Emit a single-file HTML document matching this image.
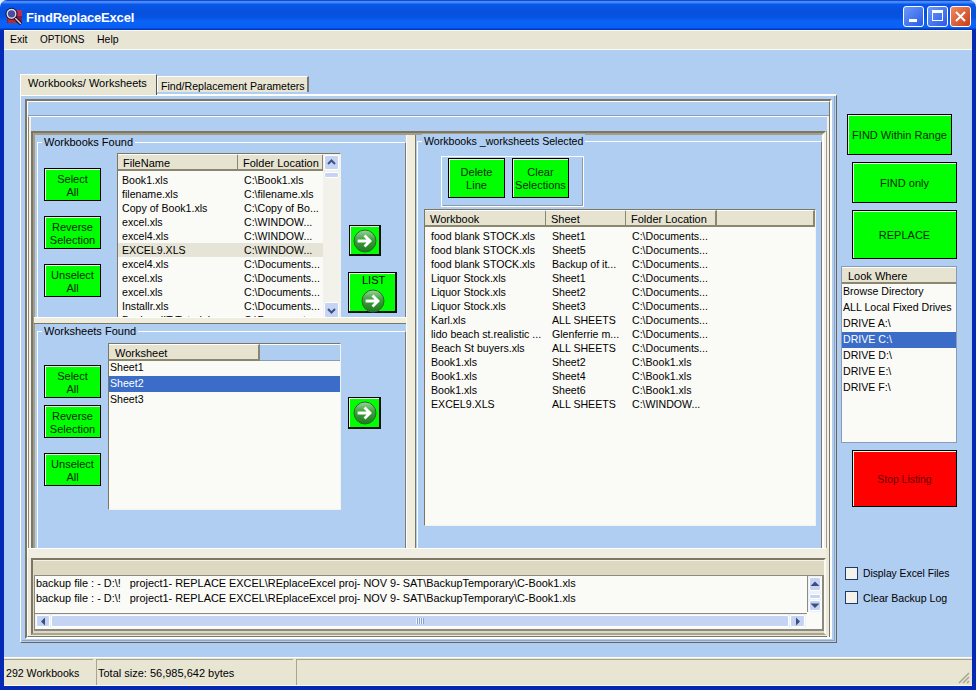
<!DOCTYPE html>
<html><head><meta charset="utf-8"><style>
html,body{margin:0;padding:0;}
body{width:976px;height:690px;position:relative;overflow:hidden;background:#b0cdf2;font-family:"Liberation Sans",sans-serif;font-size:11px;color:#000;}
.a{position:absolute;box-sizing:border-box;}
.t{position:absolute;white-space:nowrap;line-height:14px;}
.btn{position:absolute;box-sizing:border-box;background:#00ff00;border:1px solid #000;color:#062a06;text-align:center;line-height:13px;display:flex;align-items:center;justify-content:center;font-size:11px;padding-top:2px;box-shadow:inset 1px 1px 0 #e8ffe8;}
.lv{position:absolute;box-sizing:border-box;background:#fafaf6;border:1px solid #7b7763;border-right-color:#f4f4ee;border-bottom-color:#f4f4ee;overflow:hidden;}
.hd{position:absolute;top:0;height:17px;box-sizing:border-box;background:#e6e3d0;border-right:2px solid #8a8670;border-bottom:2px solid #8a8670;border-top:1px solid #fff;line-height:14px;padding-top:1px;padding-left:5px;}
.row{position:absolute;left:0;right:0;height:14px;line-height:14px;white-space:nowrap;font-size:10.6px;}
.row span{position:absolute;top:0;}
.sb{position:absolute;box-sizing:border-box;background:#c6d4f4;border:1px solid #fff;border-radius:2px;}
</style></head><body>
<div class="a" style="left:0px;top:0px;width:976px;height:690px;background:#0429b4;"></div>
<div class="a" style="left:0px;top:0px;width:976px;height:8px;background:#e8eef8;"></div>
<div class="a" style="left:0px;top:0px;width:976px;height:30px;background:linear-gradient(#1848c8 0px,#1848c8 1px,#4a90ff 1px,#3a84fc 3px,#0a58ea 4px,#0650dc 12px,#0654e4 18px,#0a62f6 21px,#0a60f4 28px,#0238c0 29px,#0238c0 30px);border-radius:7px 7px 0 0;"></div>
<svg class="a" style="left:4px;top:6px" width="22" height="20" viewBox="0 0 22 20"><rect x="3" y="4" width="15" height="13" fill="#7a2050"/><rect x="13" y="4" width="5" height="6" fill="#b83058"/><rect x="4" y="13" width="8" height="4" fill="#c02828"/><circle cx="7.5" cy="7.8" r="4.4" fill="#4a4aa0" stroke="#d8d8e0" stroke-width="1.6"/><circle cx="7.5" cy="7.8" r="5.6" fill="none" stroke="#101030" stroke-width="0.9"/><path d="M11 12 L17 18" stroke="#101020" stroke-width="3.2"/><path d="M11.3 12.3 L16.8 17.8" stroke="#f0c8c8" stroke-width="1.4"/></svg>
<div class="t" style="left:26px;top:10px;color:#fff;font-weight:bold;font-size:13px;line-height:16px;letter-spacing:-0.2px;">FindReplaceExcel</div>
<div class="a" style="left:903px;top:6px;width:21px;height:21px;border:1px solid #fff;border-radius:3px;background:linear-gradient(135deg,#6a9af8,#2a5ae8);"></div>
<div class="a" style="left:927px;top:6px;width:21px;height:21px;border:1px solid #fff;border-radius:3px;background:linear-gradient(135deg,#6a9af8,#2a5ae8);"></div>
<div class="a" style="left:950px;top:6px;width:21px;height:21px;border:1px solid #fff;border-radius:3px;background:linear-gradient(135deg,#f08a60,#c83c18);"></div>
<div class="a" style="left:909px;top:19px;width:8px;height:3px;background:#fff;"></div>
<div class="a" style="left:932px;top:10px;width:11px;height:11px;border:1px solid #fff;border-top-width:3px;"></div>
<svg class="a" style="left:954px;top:10px" width="13" height="13" viewBox="0 0 13 13"><path d="M2 2 L11 11 M11 2 L2 11" stroke="#fff" stroke-width="2"/></svg>
<div class="a" style="left:4px;top:30px;width:968px;height:20px;background:#e8e5d4;border-top:1px solid #fcfcf4;border-bottom:1px solid #fcfcf4;"></div>
<div class="t" style="left:10px;top:32px;font-size:10.5px;">Exit</div>
<div class="t" style="left:40px;top:33px;font-size:10px;letter-spacing:-0.1px;">OPTIONS</div>
<div class="t" style="left:97px;top:32px;font-size:10.5px;">Help</div>
<div class="a" style="left:4px;top:50px;width:968px;height:607px;background:#b0cdf2;"></div>
<div class="a" style="left:4px;top:657px;width:968px;height:29px;background:#e8e5d3;border-top:1px solid #fff;"></div>
<div class="a" style="left:4px;top:659px;width:89px;height:26px;border-top:1px solid #a8a490;"></div>
<div class="a" style="left:96px;top:659px;width:197px;height:26px;border-top:1px solid #a8a490;border-left:1px solid #a8a490;"></div>
<div class="a" style="left:296px;top:659px;width:676px;height:26px;border-top:1px solid #a8a490;border-left:1px solid #a8a490;"></div>
<div class="a" style="left:4px;top:685px;width:968px;height:1px;background:#fbfaf2;"></div>
<svg class="a" style="left:958px;top:672px" width="12" height="12"><path d="M11 1 L1 11 M11 5 L5 11 M11 9 L9 11" stroke="#a8a490" stroke-width="1.5"/></svg>
<div class="t" style="left:6px;top:666px;font-size:10.6px;">292 Workbooks</div>
<div class="t" style="left:98px;top:666px;">Total size: 56,985,642 bytes</div>
<div class="a" style="left:20px;top:94px;width:817px;height:549px;border:1px solid #fff;border-top-width:2px;border-right:1px solid #666;border-bottom:1px solid #666;"></div>
<div class="a" style="left:157px;top:76px;width:152px;height:16px;background:#e8e5d3;border:1px solid #fff;border-right:2px solid #777;border-bottom:none;"></div>
<div class="t" style="left:161px;top:79px;font-size:10.6px;">Find/Replacement Parameters</div>
<div class="a" style="left:20px;top:74px;width:137px;height:21px;background:#e8e5d3;border:1px solid #fff;border-right:1px solid #555;border-bottom:none;"></div>
<div class="t" style="left:28px;top:76px;">Workbooks/ Worksheets</div>
<div class="a" style="left:834px;top:96px;width:1px;height:545px;background:#9aa4b4;"></div>
<div class="a" style="left:22px;top:640px;width:813px;height:1px;background:#9aa4b4;"></div>
<div class="a" style="left:25px;top:99px;width:807px;height:540px;border:2px solid #7b7763;border-right-color:#fff;border-bottom-color:#fff;"></div>
<div class="a" style="left:27px;top:101px;width:803px;height:536px;border:1px solid #fff;border-right-color:#7b7763;border-bottom-color:#7b7763;"></div>
<div class="a" style="left:28px;top:115px;width:801px;height:1px;background:#8a9ab8;"></div>
<div class="a" style="left:29px;top:116px;width:800px;height:1px;background:#fff;"></div>
<div class="a" style="left:29px;top:116px;width:1px;height:16px;background:#fff;"></div>
<div class="a" style="left:827px;top:116px;width:2px;height:521px;background:#f4f2e6;"></div>
<div class="a" style="left:826px;top:131px;width:1px;height:505px;background:#9a9a90;"></div>
<div class="a" style="left:28px;top:117px;width:1px;height:432px;background:#8a8670;"></div>
<div class="a" style="left:29px;top:117px;width:2px;height:432px;background:#f4f2e6;"></div>
<div class="a" style="left:31px;top:131px;width:795px;height:504px;border:2px solid #7b7763;border-right-color:#f4f2e6;border-bottom-color:#f4f2e6;"></div>
<div class="a" style="left:33px;top:133px;width:791px;height:500px;border:2px solid #a49e88;border-right-color:#fff;border-bottom-color:#fff;"></div>
<div class="a" style="left:37px;top:142px;width:369px;height:180px;border:1px solid #fff;border-bottom:none;border-right:1px solid #7a7a70;"></div>
<div class="t" style="left:42px;top:135px;background:#b0cdf2;padding:0 2px;">Workbooks Found</div>
<div class="btn" style="left:44px;top:168px;width:57px;height:33px;"><span>Select<br>All</span></div>
<div class="btn" style="left:44px;top:216px;width:57px;height:33px;"><span>Reverse<br>Selection</span></div>
<div class="btn" style="left:44px;top:264px;width:57px;height:33px;"><span>Unselect<br>All</span></div>
<div class="lv" style="left:117px;top:153px;width:224px;height:166px;">
<div class="hd" style="left:0;width:121px;">FileName</div>
<div class="hd" style="left:120px;width:86px;">Folder Location</div>
<div class="row" style="top:19px;right:17px;"><span style="left:4px">Book1.xls</span><span style="left:126px">C:\Book1.xls</span></div>
<div class="row" style="top:33px;right:17px;"><span style="left:4px">filename.xls</span><span style="left:126px">C:\filename.xls</span></div>
<div class="row" style="top:47px;right:17px;"><span style="left:4px">Copy of Book1.xls</span><span style="left:126px">C:\Copy of Bo...</span></div>
<div class="row" style="top:61px;right:17px;"><span style="left:4px">excel.xls</span><span style="left:126px">C:\WINDOW...</span></div>
<div class="row" style="top:75px;right:17px;"><span style="left:4px">excel4.xls</span><span style="left:126px">C:\WINDOW...</span></div>
<div class="row" style="top:89px;background:#e6e4d6;right:17px;"><span style="left:4px">EXCEL9.XLS</span><span style="left:126px">C:\WINDOW...</span></div>
<div class="row" style="top:103px;right:17px;"><span style="left:4px">excel4.xls</span><span style="left:126px">C:\Documents...</span></div>
<div class="row" style="top:117px;right:17px;"><span style="left:4px">excel.xls</span><span style="left:126px">C:\Documents...</span></div>
<div class="row" style="top:131px;right:17px;"><span style="left:4px">excel.xls</span><span style="left:126px">C:\Documents...</span></div>
<div class="row" style="top:145px;right:17px;"><span style="left:4px">Installr.xls</span><span style="left:126px">C:\Documents...</span></div>
<div class="row" style="top:159px;right:17px;"><span style="left:4px">BackendIT Tutorial...</span><span style="left:126px">C:\Documents...</span></div>
<div class="a" style="left:205px;top:0;width:17px;height:164px;background:#f2f2ea;"></div>
<div class="sb" style="left:206px;top:1px;width:15px;height:15px;"></div>
<div class="sb" style="left:206px;top:18px;width:15px;height:6px;"></div>
<div class="sb" style="left:206px;top:148px;width:15px;height:16px;"></div>
<svg class="a" style="left:209px;top:5px" width="9" height="6"><path d="M1 5 L4.5 1.5 L8 5" fill="none" stroke="#3d5185" stroke-width="2"/></svg>
<svg class="a" style="left:209px;top:154px" width="9" height="6"><path d="M1 1 L4.5 4.5 L8 1" fill="none" stroke="#3d5185" stroke-width="2"/></svg>
</div>
<div class="a" style="left:349px;top:225px;width:32px;height:31px;background:#00ff00;border:1px solid #000;border-right:2px solid #111;border-bottom:2px solid #111;box-shadow:inset 1px 1px 0 #e8ffe8;"></div>
<svg class="a" style="left:353.0px;top:228.5px" width="24" height="24" viewBox="0 0 24 24"><defs><linearGradient id="g349225" x1="0" y1="0" x2="0" y2="1"><stop offset="0" stop-color="#9ad49a"/><stop offset="0.45" stop-color="#3aa03a"/><stop offset="1" stop-color="#1e7a1e"/></linearGradient></defs><circle cx="12" cy="12" r="11" fill="url(#g349225)" stroke="#2a6a2a" stroke-width="1"/><path d="M6 12 H16.5 M12.5 7.5 L17 12 L12.5 16.5" fill="none" stroke="#fff" stroke-width="2.8" stroke-linecap="square" stroke-linejoin="miter"/></svg>
<div class="a" style="left:348px;top:272px;width:49px;height:41px;background:#00ff00;border:1px solid #000;border-right:2px solid #111;border-bottom:2px solid #111;box-shadow:inset 1px 1px 0 #e8ffe8;"></div>
<div class="t" style="left:362px;top:273px;color:#000;font-size:11px;">LIST</div>
<svg class="a" style="left:360.5px;top:289px" width="24" height="24" viewBox="0 0 24 24"><defs><linearGradient id="g348272" x1="0" y1="0" x2="0" y2="1"><stop offset="0" stop-color="#9ad49a"/><stop offset="0.45" stop-color="#3aa03a"/><stop offset="1" stop-color="#1e7a1e"/></linearGradient></defs><circle cx="12" cy="12" r="11" fill="url(#g348272)" stroke="#2a6a2a" stroke-width="1"/><path d="M6 12 H16.5 M12.5 7.5 L17 12 L12.5 16.5" fill="none" stroke="#fff" stroke-width="2.8" stroke-linecap="square" stroke-linejoin="miter"/></svg>
<div class="a" style="left:34px;top:317px;width:372px;height:7px;background:#efedde;border-top:1px solid #fff;border-bottom:1px solid #7b7763;"></div>
<div class="a" style="left:37px;top:331px;width:369px;height:218px;border:1px solid #fff;border-right:1px solid #7a7a70;border-bottom:1px solid #7a7a70;"></div>
<div class="t" style="left:42px;top:324px;background:#b0cdf2;padding:0 2px;">Worksheets Found</div>
<div class="btn" style="left:44px;top:365px;width:57px;height:33px;"><span>Select<br>All</span></div>
<div class="btn" style="left:44px;top:405px;width:57px;height:33px;"><span>Reverse<br>Selection</span></div>
<div class="btn" style="left:44px;top:453px;width:57px;height:33px;"><span>Unselect<br>All</span></div>
<div class="lv" style="left:108px;top:343px;width:233px;height:167px;">
<div class="a" style="left:0;top:0;width:231px;height:17px;background:#afccf1;border-top:1px solid #fff;border-bottom:1px solid #8a9ab8;"></div>
<div class="hd" style="left:0;width:151px;padding-left:6px;">Worksheet</div>
<div class="row" style="top:16px;height:16px;line-height:15px;"><span style="left:1px">Sheet1</span></div>
<div class="row" style="top:32px;height:16px;line-height:15px;background:#3a6cc8;color:#fff;"><span style="left:1px">Sheet2</span></div>
<div class="row" style="top:48px;height:16px;line-height:15px;"><span style="left:1px">Sheet3</span></div>
</div>
<div class="a" style="left:348px;top:397px;width:33px;height:32px;background:#00ff00;border:1px solid #000;border-right:2px solid #111;border-bottom:2px solid #111;box-shadow:inset 1px 1px 0 #e8ffe8;"></div>
<svg class="a" style="left:352.5px;top:401.0px" width="24" height="24" viewBox="0 0 24 24"><defs><linearGradient id="g348397" x1="0" y1="0" x2="0" y2="1"><stop offset="0" stop-color="#9ad49a"/><stop offset="0.45" stop-color="#3aa03a"/><stop offset="1" stop-color="#1e7a1e"/></linearGradient></defs><circle cx="12" cy="12" r="11" fill="url(#g348397)" stroke="#2a6a2a" stroke-width="1"/><path d="M6 12 H16.5 M12.5 7.5 L17 12 L12.5 16.5" fill="none" stroke="#fff" stroke-width="2.8" stroke-linecap="square" stroke-linejoin="miter"/></svg>
<div class="a" style="left:406px;top:135px;width:10px;height:414px;background:#efedde;border-left:1px solid #fff;border-right:1px solid #7b7763;"></div>
<div class="a" style="left:417px;top:141px;width:405px;height:408px;border:1px solid #fff;border-right:1px solid #7a7a70;border-bottom:1px solid #7a7a70;"></div>
<div class="t" style="left:422px;top:134px;background:#b0cdf2;padding:0 2px;font-size:10.6px;">Workbooks _worksheets Selected</div>
<div class="a" style="left:441px;top:156px;width:143px;height:51px;border:1px solid #fff;"></div>
<div class="a" style="left:442px;top:157px;width:141px;height:49px;border:1px solid transparent;border-right-color:#8a9ab0;border-bottom-color:#8a9ab0;"></div>
<div class="btn" style="left:448px;top:158px;width:57px;height:40px;"><span>Delete<br>Line</span></div>
<div class="btn" style="left:512px;top:158px;width:57px;height:40px;"><span>Clear<br>Selections</span></div>
<div class="lv" style="left:424px;top:209px;width:392px;height:317px;">
<div class="hd" style="left:0;width:390px;"></div>
<div class="hd" style="left:0;width:122px;">Workbook</div>
<div class="hd" style="left:121px;width:81px;">Sheet</div>
<div class="hd" style="left:201px;width:91px;">Folder Location</div>
<div class="row" style="top:19px;"><span style="left:6px">food blank STOCK.xls</span><span style="left:127px">Sheet1</span><span style="left:207px">C:\Documents...</span></div>
<div class="row" style="top:33px;"><span style="left:6px">food blank STOCK.xls</span><span style="left:127px">Sheet5</span><span style="left:207px">C:\Documents...</span></div>
<div class="row" style="top:47px;"><span style="left:6px">food blank STOCK.xls</span><span style="left:127px">Backup of it...</span><span style="left:207px">C:\Documents...</span></div>
<div class="row" style="top:61px;"><span style="left:6px">Liquor Stock.xls</span><span style="left:127px">Sheet1</span><span style="left:207px">C:\Documents...</span></div>
<div class="row" style="top:75px;"><span style="left:6px">Liquor Stock.xls</span><span style="left:127px">Sheet2</span><span style="left:207px">C:\Documents...</span></div>
<div class="row" style="top:89px;"><span style="left:6px">Liquor Stock.xls</span><span style="left:127px">Sheet3</span><span style="left:207px">C:\Documents...</span></div>
<div class="row" style="top:103px;"><span style="left:6px">Karl.xls</span><span style="left:127px">ALL SHEETS</span><span style="left:207px">C:\Documents...</span></div>
<div class="row" style="top:117px;"><span style="left:6px">lido beach st.realistic ...</span><span style="left:127px">Glenferrie m...</span><span style="left:207px">C:\Documents...</span></div>
<div class="row" style="top:131px;"><span style="left:6px">Beach St buyers.xls</span><span style="left:127px">ALL SHEETS</span><span style="left:207px">C:\Documents...</span></div>
<div class="row" style="top:145px;"><span style="left:6px">Book1.xls</span><span style="left:127px">Sheet2</span><span style="left:207px">C:\Book1.xls</span></div>
<div class="row" style="top:159px;"><span style="left:6px">Book1.xls</span><span style="left:127px">Sheet4</span><span style="left:207px">C:\Book1.xls</span></div>
<div class="row" style="top:173px;"><span style="left:6px">Book1.xls</span><span style="left:127px">Sheet6</span><span style="left:207px">C:\Book1.xls</span></div>
<div class="row" style="top:187px;"><span style="left:6px">EXCEL9.XLS</span><span style="left:127px">ALL SHEETS</span><span style="left:207px">C:\WINDOW...</span></div>
</div>
<div class="a" style="left:28px;top:548px;width:801px;height:88px;background:#ece9da;"></div>
<div class="a" style="left:28px;top:548px;width:798px;height:10px;background:#f0eee2;border-top:1px solid #fff;"></div>
<div class="a" style="left:31px;top:558px;width:795px;height:77px;background:#dcd8c2;border:2px solid #7b7763;border-right-color:#fbfaf2;border-bottom-color:#a8a490;"></div>
<div class="a" style="left:33px;top:560px;width:791px;height:1px;background:#f4f2e8;"></div>
<div class="a" style="left:34px;top:575px;width:790px;height:56px;background:#fafaf6;border:1px solid #8a8a80;border-right:2px solid #8a8a80;border-bottom:2px solid #8a8a80;"></div>
<div class="t" style="left:36px;top:576px;font-size:10.9px;">backup file : - D:\!&nbsp;&nbsp; project1- REPLACE EXCEL\REplaceExcel proj- NOV 9- SAT\BackupTemporary\C-Book1.xls</div>
<div class="t" style="left:36px;top:591px;font-size:10.9px;">backup file : - D:\!&nbsp;&nbsp; project1- REPLACE EXCEL\REplaceExcel proj- NOV 9- SAT\BackupTemporary\C-Book1.xls</div>
<div class="a" style="left:35px;top:614px;width:771px;height:13px;background:#eef0f8;"></div>
<div class="a" style="left:36px;top:615px;width:14px;height:12px;background:#c6d4f4;border:1px solid #fff;border-radius:2px;"></div>
<div class="a" style="left:51px;top:615px;width:738px;height:12px;background:#c6d4f4;border:1px solid #fff;border-radius:2px;"></div>
<div class="a" style="left:790px;top:615px;width:15px;height:12px;background:#c6d4f4;border:1px solid #fff;border-radius:2px;"></div>
<div class="a" style="left:416px;top:618px;width:1px;height:6px;background:#eef4ff;"></div>
<div class="a" style="left:417px;top:618px;width:1px;height:6px;background:#8ca0d0;"></div>
<div class="a" style="left:418px;top:618px;width:1px;height:6px;background:#eef4ff;"></div>
<div class="a" style="left:419px;top:618px;width:1px;height:6px;background:#8ca0d0;"></div>
<div class="a" style="left:420px;top:618px;width:1px;height:6px;background:#eef4ff;"></div>
<div class="a" style="left:421px;top:618px;width:1px;height:6px;background:#8ca0d0;"></div>
<div class="a" style="left:422px;top:618px;width:1px;height:6px;background:#eef4ff;"></div>
<div class="a" style="left:423px;top:618px;width:1px;height:6px;background:#8ca0d0;"></div>
<div class="a" style="left:35px;top:613px;width:771px;height:1px;background:#a8a898;"></div>
<svg class="a" style="left:40px;top:617px" width="6" height="9"><path d="M5 0.5 L1 4.5 L5 8.5Z" fill="#3a4f80"/></svg>
<svg class="a" style="left:795px;top:617px" width="6" height="9"><path d="M1 0.5 L5 4.5 L1 8.5Z" fill="#3a4f80"/></svg>
<div class="a" style="left:808px;top:576px;width:13px;height:36px;background:#eef0f8;"></div>
<div class="a" style="left:807px;top:576px;width:1px;height:36px;background:#8a8a80;"></div>
<div class="a" style="left:35px;top:613px;width:772px;height:1px;background:#8a8a80;"></div>
<div class="a" style="left:809px;top:577px;width:12px;height:14px;background:#c6d4f4;border:1px solid #fff;border-radius:2px;"></div>
<div class="a" style="left:809px;top:594px;width:12px;height:5px;background:#c6d4f4;border:1px solid #fff;border-radius:2px;"></div>
<div class="a" style="left:809px;top:600px;width:12px;height:11px;background:#c6d4f4;border:1px solid #fff;border-radius:2px;"></div>
<svg class="a" style="left:810px;top:581px" width="10" height="6"><path d="M0.5 5 L5 0.5 L9.5 5Z" fill="#3a4f80"/></svg>
<svg class="a" style="left:810px;top:603px" width="10" height="6"><path d="M0.5 0.5 L5 5 L9.5 0.5Z" fill="#3a4f80"/></svg>
<div class="btn" style="left:847px;top:114px;width:105px;height:41px;"><span>FIND Within Range</span></div>
<div class="btn" style="left:852px;top:162px;width:105px;height:41px;"><span>FIND only</span></div>
<div class="btn" style="left:852px;top:210px;width:105px;height:49px;"><span>REPLACE</span></div>
<div class="lv" style="left:841px;top:266px;width:116px;height:177px;border-color:#8a9ab8;">
<div class="hd" style="left:0;width:114px;border-right:none;padding-left:6px;">Look Where</div>
<div class="row" style="top:17px;height:16px;line-height:15px;"><span style="left:1px">Browse Directory</span></div>
<div class="row" style="top:33px;height:16px;line-height:15px;"><span style="left:1px">ALL Local Fixed Drives</span></div>
<div class="row" style="top:49px;height:16px;line-height:15px;"><span style="left:1px">DRIVE A:\</span></div>
<div class="row" style="top:65px;height:16px;line-height:15px;background:#3a6cc8;color:#fff;"><span style="left:1px">DRIVE C:\</span></div>
<div class="row" style="top:81px;height:16px;line-height:15px;"><span style="left:1px">DRIVE D:\</span></div>
<div class="row" style="top:97px;height:16px;line-height:15px;"><span style="left:1px">DRIVE E:\</span></div>
<div class="row" style="top:113px;height:16px;line-height:15px;"><span style="left:1px">DRIVE F:\</span></div>
</div>
<div class="btn" style="left:852px;top:450px;width:105px;height:57px;background:#ff0000;color:#600000;font-size:10.4px;"><span>Stop Listing</span></div>
<div class="a" style="left:845px;top:567px;width:13px;height:13px;background:#f4f2ea;border:1px solid #1c3a6a;"></div>
<div class="t" style="left:863px;top:567px;font-size:10.3px;">Display Excel Files</div>
<div class="a" style="left:845px;top:591px;width:13px;height:13px;background:#f4f2ea;border:1px solid #1c3a6a;"></div>
<div class="t" style="left:863px;top:591px;font-size:10.6px;">Clear Backup Log</div>
</body></html>
